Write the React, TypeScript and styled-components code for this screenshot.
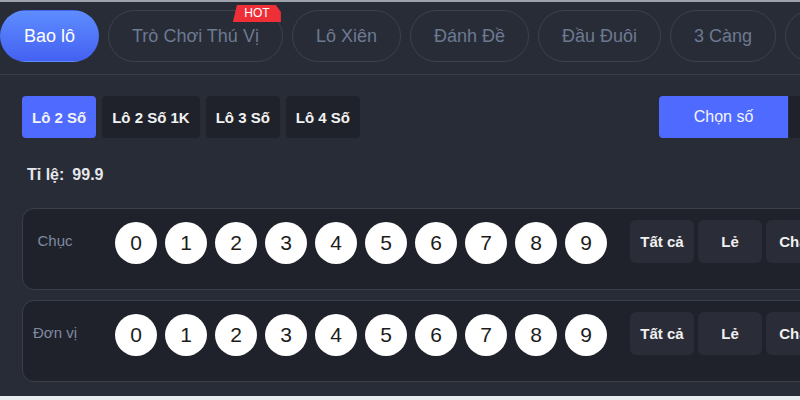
import React, { useState } from "react";
import styled, { createGlobalStyle, css } from "styled-components";

const sans = css`
  font-family: "Liberation Sans", Arial, Helvetica, sans-serif;
`;

const GlobalStyle = createGlobalStyle`
  html, body {
    margin: 0;
    padding: 0;
    background: #e8edf0;
    font-family: "Liberation Sans", Arial, sans-serif;
  }
  button {
    font-family: "Liberation Sans", Arial, sans-serif;
  }
`;

const Page = styled.div`
  width: 800px;
  height: 396px;
  overflow: hidden;
  background: #282c37;
  border-top: 2px solid #9ea3ab;
  box-sizing: border-box;
`;

const TabBar = styled.div`
  display: flex;
  gap: 9px;
  padding: 8px 0 12px 0;
  border-bottom: 1px solid #3a3f4a;
  white-space: nowrap;
`;

const Tab = styled.button<{ $active?: boolean }>`
  ${sans};
  position: relative;
  flex-shrink: 0;
  height: 52px;
  padding: 0 23px;
  border-radius: 26px;
  font-size: 18px;
  color: ${(p) => (p.$active ? "#ffffff" : "#6c7a92")};
  background: ${(p) =>
    p.$active ? "linear-gradient(180deg, #5e8dff 0%, #4461f2 100%)" : "transparent"};
  border: 1px solid ${(p) => (p.$active ? "transparent" : "#3c414d")};
  cursor: pointer;
`;

const HotBadge = styled.span`
  ${sans};
  position: absolute;
  top: -6px;
  right: 1px;
  width: 48px;
  height: 17px;
  line-height: 17px;
  font-size: 12px;
  color: #fff;
  text-align: center;
  background: #ee2f38;
  clip-path: polygon(4px 0, calc(100% - 5px) 0, 100% 7px, 100% 100%, 0 100%);
  border-radius: 3px 0 0 0;
`;

const Content = styled.div`
  width: 940px;
  padding: 21px 22px 0;
  box-sizing: border-box;
`;

const Toolbar = styled.div`
  display: flex;
  align-items: center;
`;

const Group = styled.div<{ $gap: number }>`
  display: flex;
  gap: ${(p) => p.$gap}px;
`;

const SubTab = styled.button<{ $active?: boolean }>`
  ${sans};
  height: 42px;
  padding: 0 10px;
  border: none;
  border-radius: 4px;
  font-size: 15px;
  font-weight: 700;
  color: #f2f2f2;
  background: ${(p) => (p.$active ? "#4f6bff" : "#1f222a")};
  cursor: pointer;
`;

const ModeButton = styled.button<{ $active?: boolean }>`
  ${sans};
  width: 129px;
  height: 42px;
  border: none;
  border-radius: ${(p) => (p.$active ? "4px 0 0 4px" : "0 4px 4px 0")};
  font-size: 16px;
  color: #f4f4ff;
  background: ${(p) => (p.$active ? "#4f6bff" : "#1f222a")};
  cursor: pointer;
`;

const Spacer = styled.div`
  flex: 1;
`;

const Rate = styled.div`
  ${sans};
  display: flex;
  gap: 8px;
  margin: 27px 0 0 5px;
  height: 20px;
  line-height: 20px;
  font-size: 16px;
  font-weight: 700;
  color: #e6e7ea;
`;

const Panels = styled.div`
  display: flex;
  flex-direction: column;
  gap: 10px;
  margin-top: 23px;
`;

const Panel = styled.div`
  display: flex;
  align-items: flex-start;
  height: 82px;
  box-sizing: border-box;
  padding: 13px 0 0;
  background: #1f222a;
  border: 1px solid #3b3f4a;
  border-radius: 12px;
`;

const Label = styled.div`
  ${sans};
  width: 64px;
  flex-shrink: 0;
  padding-top: 10px;
  margin-right: 28px;
  text-align: center;
  font-size: 15px;
  color: #7f8aa1;
`;

const Balls = styled.div`
  display: flex;
  gap: 8px;
  margin-right: 23px;
`;

const Ball = styled.button<{ $picked?: boolean }>`
  ${sans};
  width: 42px;
  height: 42px;
  padding: 0;
  border: none;
  border-radius: 50%;
  font-size: 21px;
  color: ${(p) => (p.$picked ? "#fff" : "#1c1c1c")};
  background: ${(p) => (p.$picked ? "#4f6bff" : "#ffffff")};
  cursor: pointer;
`;

const QuickPicks = styled.div`
  display: flex;
  gap: 4px;
  margin-top: -2px;
`;

const QuickPick = styled.button`
  ${sans};
  width: 64px;
  height: 43px;
  border: none;
  border-radius: 6px;
  font-size: 15px;
  font-weight: 700;
  color: #f0f0f0;
  background: #2a2d37;
  white-space: nowrap;
  cursor: pointer;
`;

const games = ["Bao lô", "Trò Chơi Thú Vị", "Lô Xiên", "Đánh Đề", "Đầu Đuôi", "3 Càng", "4 Càng"];
const kinds = ["Lô 2 Số", "Lô 2 Số 1K", "Lô 3 Số", "Lô 4 Số"];
const rows = ["Chục", "Đơn vị"];
const digits = [0, 1, 2, 3, 4, 5, 6, 7, 8, 9];
const picks = ["Tất cả", "Lẻ", "Chẵn", "Tài", "Xỉu"];

const App: React.FC = () => {
  const [game, setGame] = useState(0);
  const [kind, setKind] = useState(0);
  const [picked, setPicked] = useState<Record<string, boolean>>({});

  const toggle = (key: string) => setPicked((p) => ({ ...p, [key]: !p[key] }));

  return (
    <>
      <GlobalStyle />
      <Page>
        <TabBar>
          {games.map((g, i) => (
            <Tab key={g} $active={i === game} onClick={() => setGame(i)}>
              {g}
              {g === "Trò Chơi Thú Vị" && <HotBadge>HOT</HotBadge>}
            </Tab>
          ))}
        </TabBar>
        <Content>
          <Toolbar>
            <Group $gap={6}>
              {kinds.map((k, i) => (
                <SubTab key={k} $active={i === kind} onClick={() => setKind(i)}>
                  {k}
                </SubTab>
              ))}
            </Group>
            <Spacer />
            <Group $gap={1}>
              <ModeButton $active>Chọn số</ModeButton>
              <ModeButton>Nhập số</ModeButton>
            </Group>
          </Toolbar>
          <Rate>
            <span>Tỉ lệ:</span>
            <span>99.9</span>
          </Rate>
          <Panels>
            {rows.map((r) => (
              <Panel key={r}>
                <Label>{r}</Label>
                <Balls>
                  {digits.map((d) => (
                    <Ball key={d} $picked={picked[r + d]} onClick={() => toggle(r + d)}>
                      {d}
                    </Ball>
                  ))}
                </Balls>
                <QuickPicks>
                  {picks.map((p) => (
                    <QuickPick key={p}>{p}</QuickPick>
                  ))}
                </QuickPicks>
              </Panel>
            ))}
          </Panels>
        </Content>
      </Page>
    </>
  );
};

export default App;
